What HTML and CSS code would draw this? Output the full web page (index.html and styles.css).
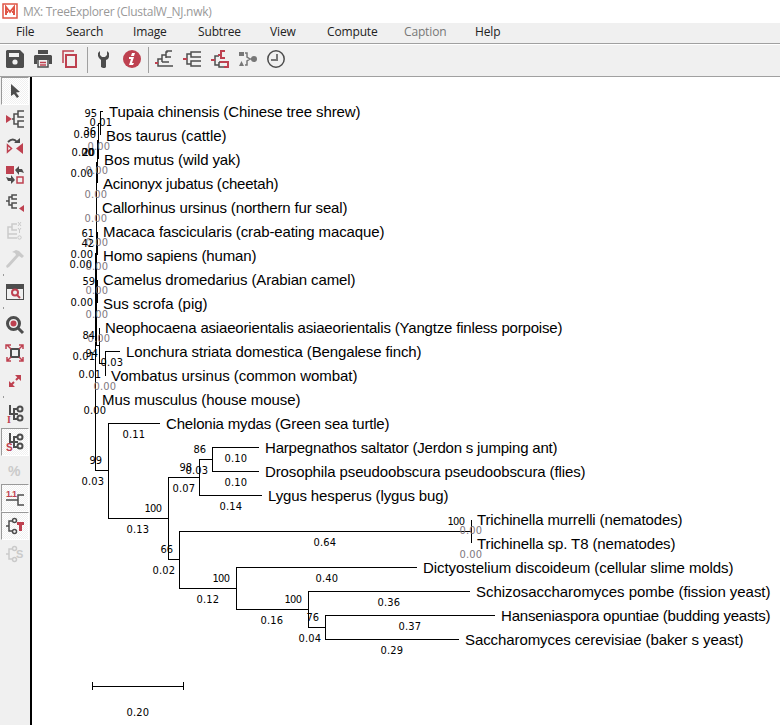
FILE: index.html
```html
<!DOCTYPE html>
<html lang="en">
<head>
<meta charset="utf-8">
<title>MX: TreeExplorer</title>
<link rel="stylesheet" href="styles.css">
</head>
<body>
<div class="window">
<header class="titlebar">
<svg class="logo" width="16" height="16" viewBox="0 0 16 16"><path class="rs" d="M1 1h14v14H1z"/><path class="rs" stroke-width="2" d="M4 12V4l4 5 4-5v8M4 9h2M10 9h2"/></svg>
<span>MX: TreeExplorer (ClustalW_NJ.nwk)</span>
</header>
<nav class="menu"><span>File</span><span>Search</span><span>Image</span><span>Subtree</span><span>View</span><span>Compute</span><span class="off">Caption</span><span>Help</span></nav>
<div class="toolbar">
<svg viewBox="0 0 18 18"><path class="d" d="M1 0h13l4 4v13l-1 1H1l-1-1V1z"/><path class="bg" d="M3 3h10v4H3z"/><circle class="bg" cx="9" cy="12" r="2.6"/></svg>
<svg viewBox="0 0 18 18"><path class="d" d="M4 0h10v4H4zM0 6l1-1h16l1 1v8h-3v-4H3v4H0z"/><path class="bg" d="M4 10h10v8H4z"/><path class="ds" d="M4 10v7h10v-7"/><path class="rs" d="M6 12.500h6M6 15h6"/></svg>
<svg viewBox="0 0 18 18"><path class="rs" d="M2 13V1h11"/><path class="rs" stroke-width="2" d="M5 5h10v12H5z"/></svg>
<i class="rule"></i>
<svg viewBox="0 0 18 18"><path class="d" d="M5 1v4l2 2h3l2-2V1l2 2v4l-1 2-2 1v7l-1 1H8l-2-1v-7L4 8 3 6V3z"/></svg>
<svg viewBox="0 0 18 18"><circle class="r" cx="9" cy="9" r="9"/><path class="w" d="M9 3h3l-1 3H8zM6 7h5l-2 6h2l-1 2H6l2-6H6z"/></svg>
<i class="rule"></i>
<svg viewBox="0 0 18 18"><path class="ds" d="M3 13V9h4M7 12V5h4M11 8V2h1V1h5M11 7h5M7 12h7M3 9v7h15"/><path class="rs" stroke-width="2" d="M0 13h3"/></svg>
<svg viewBox="0 0 18 18"><path class="ds" d="M4 9V4h4M4 9v5h4M18 2H8v5h10M18 11H8v5h10"/><path class="rs" stroke-width="2" d="M0 9h4"/></svg>
<svg viewBox="0 0 18 18"><path class="ds" d="M4 10V6h4M4 10v5h4M8 12v5h8M8 12h6"/><path class="rs" stroke-width="2" d="M0 10h4M14 1h-4v7h4M7 5h3M9 12h8v5h-4"/></svg>
<svg viewBox="0 0 18 18"><path class="m" d="M0 2h5v4H0zM0 16l2.500-5L5 16z"/><circle class="m" cx="15" cy="9" r="3"/><path class="ms" d="M6 3h2v4l3 2-3 2v4H6M10 9h3"/></svg>
<svg viewBox="0 0 18 18"><circle class="ds" cx="9" cy="9" r="8.200"/><path class="ms" stroke-width="2" d="M10 4v6H4"/></svg>
</div>
<main class="body">
<aside class="side">
<b class="on"><svg viewBox="0 0 18 18"><path class="d" d="M5 2l9 8-4 .6 3 4-2 1.400-3-4-3 2z"/></svg></b>
<b><svg viewBox="0 0 18 18"><path class="r" d="M0 5l6 4-6 4z"/><path class="ds" d="M6 9h2M12 4H8v10h4M18 1h-6v6h6M18 11h-6v6h6"/></svg></b>
<b><svg viewBox="0 0 18 18"><path class="rs" d="M1.500 7v7l4-3.500z"/><path class="r" d="M17 5v11l-7-5.500z"/><path class="ds" stroke-width="2" d="M2 4q5-5 9 0"/><path class="d" d="M8 5h6V0z"/></svg></b>
<b><svg viewBox="0 0 18 18"><path class="r" d="M0 0h8v8H0z"/><path class="rs" d="M11 11h6v6h-6z"/><path class="d" d="M9 4l4-4v3h3l2 4-3-1h-2v3zM9 14l-4 4v-3H2l-2-4 3 1h2V9z"/></svg></b>
<b><svg viewBox="0 0 18 18"><path class="ds" d="M0 7h3M6 3H3v8h3M11 1H6v4h5M11 9H6v5h5"/><path class="r" d="M18 11v7l-5-3.500z"/></svg></b>
<b><svg viewBox="0 0 18 18"><path class="gs" d="M6 5H2v11h9M11 2H6v6h5M6 12h5M2 12h4"/><path class="gs thin" d="M12 0l3 4M15 0l-3 4M12 6l1.500 2L15 6M13.500 8v3"/><circle class="gs thin" cx="13.500" cy="15.500" r="1.700"/></svg></b>
<b><svg viewBox="0 0 18 18"><path class="g" d="M6 2l4-2 3 1 5 5-2 2-3-2L3 17l-2 1-1-2L10 5 9 3z"/></svg></b>
<i class="dot"></i>
<b><svg viewBox="0 0 18 18"><path class="d" d="M0 1h18v16H0z"/><path class="bg" d="M1 6h16v10H1z"/><circle class="rs" stroke-width="2" cx="9" cy="9.500" r="3"/><path class="rs" stroke-width="2" d="M11 12l3 3"/></svg></b>
<i class="dot"></i>
<b><svg viewBox="0 0 18 18"><circle class="ds big" cx="7.500" cy="7.500" r="6"/><circle class="r" cx="7.500" cy="7.500" r="3"/><path class="ds big" d="M12 12l5 5"/></svg></b>
<b><svg viewBox="0 0 18 18"><path class="ds" stroke-width="2" d="M5 5h8v8H5z"/><path class="rs" d="M0 5V1h5M13 1h4v4M17 13v4h-4M5 17H1v-4M1 1l4 4M17 1l-4 4M17 17l-4-4M1 17l4-4"/></svg></b>
<b><svg viewBox="0 0 18 18"><path class="r" d="M9 3h6v6zM3 9v6h6z"/><path class="rs" stroke-width="2" d="M5 13l3-3M10 8l3-3"/></svg></b>
<i class="dot"></i>
<b><svg viewBox="0 0 18 18"><path class="ds" stroke-width="2" d="M4 0v9h8M8 9v5h4M8 9V4h4"/><circle class="ds" stroke-width="2" cx="14" cy="4" r="2.500"/><circle class="ds" stroke-width="2" cx="14" cy="13" r="2.500"/><text class="ic serif" x="1" y="18">I</text></svg></b>
<b class="on"><svg viewBox="0 0 18 18"><path class="ds" stroke-width="2" d="M4 0v9h8M8 9v5h4M8 9V4h4"/><circle class="ds" stroke-width="2" cx="14" cy="4" r="2.500"/><circle class="ds" stroke-width="2" cx="14" cy="13" r="2.500"/><text class="ic" x="0" y="18">S</text></svg></b>
<b><svg viewBox="0 0 18 18"><text class="ic pct" x="2" y="15">%</text></svg></b>
<b class="on"><svg viewBox="0 0 18 18"><text class="ic small" x="0" y="8" textLength="11">1.1</text><path class="ds" d="M0 11h12M18 6h-6v10h6"/></svg></b>
<b class="on"><svg viewBox="0 0 18 18"><path class="ds" d="M0 9h3M7 4H3v10h4"/><circle class="ds" cx="8.500" cy="3.500" r="2"/><circle class="ds" cx="8.500" cy="14.500" r="2"/><path class="r" d="M11 5h7v3h-2v6h-3V8h-2z"/></svg></b>
<b><svg viewBox="0 0 18 18"><path class="gs" d="M0 9h3M7 4H3v10h4"/><circle class="gs" cx="8.500" cy="3.500" r="2"/><circle class="gs" cx="8.500" cy="14.500" r="2"/><text class="ic faint" x="10" y="13">S</text></svg></b>
</aside>
<svg class="tree" id="tree" width="748" height="647" viewBox="32 78 748 647"></svg>
</main>
</div>
<script src="tree.js"></script>
</body>
</html>
```
FILE: styles.css
```css
body { margin: 0; background: #fff; }
.window { width: 780px; height: 725px; overflow: hidden; display: flex; flex-direction: column; font: 12px "Open Sans", "Noto Sans", sans-serif; }
.titlebar { height: 23px; flex: none; display: flex; align-items: center; gap: 5px; padding-left: 2px; color: #999; letter-spacing: -.3px; }
.titlebar svg { margin-bottom: 1px; }
.menu { height: 20px; line-height: 18px; flex: none; display: flex; align-items: flex-start; background: #f0f0f0; border-bottom: 1px solid #a0a0a0; color: #222; letter-spacing: -.15px; }
.menu span { width: 0; white-space: nowrap; }
.menu span:nth-child(1) { margin-left: 16px; }
.menu span:nth-child(2) { margin-left: 50px; }
.menu span:nth-child(3) { margin-left: 67px; }
.menu span:nth-child(4) { margin-left: 65px; }
.menu span:nth-child(5) { margin-left: 72px; }
.menu span:nth-child(6) { margin-left: 57px; }
.menu span:nth-child(7) { margin-left: 77px; }
.menu span:nth-child(8) { margin-left: 71px; }
.menu .off { color: #777; }
.toolbar { box-sizing: border-box; height: 33px; flex: none; display: flex; align-items: flex-start; gap: 10px; padding: 5px 0 0 6px; background: #f0f0f0; border-top: 1px solid #fff; border-bottom: 1px solid #a0a0a0; }
.toolbar svg, .side svg { width: 18px; height: 18px; flex: none; display: block; overflow: visible; }
.toolbar svg:nth-of-type(3) { margin-left: -1px; }
.rule { width: 1px; height: 26px; background: #a0a0a0; margin: -3px -3px 0 -2px; }
.rule + svg { margin-left: 0; }
.rule ~ .rule { margin-left: -3px; }
.rule ~ .rule + svg { margin-left: -1px; }
.body { flex: 1; display: flex; min-height: 0; }
.side { width: 30px; flex: none; background: #f0f0f0; border-right: 2px solid #000; }
.side b { display: block; box-sizing: border-box; height: 28px; width: 28px; margin-left: 1px; padding: 5px 0 0 5px; }
.side .on { border: 1px solid #fff; border-top-color: #999; border-left-color: #999; padding: 4px 0 0 4px; background: repeating-conic-gradient(#fff 0 25%, #f0f0f0 0 50%) 0 0 / 2px 2px; }
.dot { display: block; width: 1px; height: 2px; background: #999; margin: 1px 0 2px 3px; }
.tree { display: block; flex: none; margin-top: 1px; }
.d { fill: #4d4d4d; } .r { fill: #be4150; } .m { fill: #777; } .g { fill: #cacaca; } .bg { fill: #f0f0f0; } .w { fill: #fff; }
.ds, .rs, .ms, .gs { fill: none; }
.ds { stroke: #4d4d4d; } .rs { stroke: #be4150; } .ms { stroke: #777; } .gs { stroke: #cacaca; }
.ds:not([stroke-width]), .rs:not([stroke-width]), .ms:not([stroke-width]), .gs:not([stroke-width]) { stroke-width: 1.5; }
.logo .rs { stroke: #e05545; }
.gs.thin:not([stroke-width]) { stroke-width: 1; }
.ds.big:not([stroke-width]) { stroke-width: 3; }
.ic { font: bold 10px "Liberation Sans", sans-serif; fill: #be4150; }
.serif { font-family: "Liberation Serif", serif; }
.small { font-size: 9px; }
.pct { font-size: 14px; fill: #cacaca; }
.faint { font-size: 11px; fill: #cacaca; }
.branch { fill: none; stroke: #000; stroke-width: 1; shape-rendering: crispEdges; }
.name { font: 15px "Liberation Sans", Arial, sans-serif; fill: #000; }
.num { font: 11px "DejaVu Sans Condensed", "DejaVu Sans", sans-serif; fill: #000; }
.zero { fill: #807880; }
```
FILE: tree.js
```js
const tree = document.getElementById('tree');
const make = (tag, attrs, text) => {
  const el = document.createElementNS('http://www.w3.org/2000/svg', tag);
  for (const key in attrs) el.setAttribute(key, attrs[key]);
  if (text) el.textContent = text;
  tree.appendChild(el);
};

// Branches: horizontal [y, x1, x2] and vertical [x, y1, y2]
const across = [[111,100,102],[123,98,100],[345,96,99],[363,99,105],[351,105,119],[470,95,108],[423,108,159],[518,108,168],[477,168,199],[459,199,212],[447,212,258],[471,212,258],[495,199,261],[559,168,179],[531,179,471],[588,179,236],[567,236,416],[609,236,308],[591,308,469],[627,308,325],[615,325,494],[639,325,458],[686,92,183]];
const down = [[100,111,134],[98,123,158],[97,140,182],[96,162,345],[97,232,254],[97,280,302],[99,328,363],[105,351,375],[95,253,470],[108,423,518],[168,477,559],[199,459,495],[212,447,471],[179,531,588],[471,520,542],[236,567,609],[308,591,627],[325,615,639],[92,682,689],[183,682,689]];
let d = '';
for (const [y, a, b] of across) d += `M${a} ${y + .5}H${b + 1}`;
for (const [x, a, b] of down) d += `M${x + .5} ${a}V${b + 1}`;
make('path', { class: 'branch', d });

// Support values and branch lengths: [x, baseline, text]
const zeros = [[88,150],[86,174],[85,198],[85,222],[86,246],[86,270],[86,294],[86,318],[88,342],[94,390],[460,534],[460,558]];
for (const [x, y] of zeros) make('text', { class: 'num zero', x: x - .5, y, textLength: 22.5 }, '0.00');
const values = [[85,117,'95'],[90,126,'0.01'],[84,135,'36'],[74,138,'0.00'],[72,156,'0.00'],[82,156,'20'],[83,156,'20'],[71,177,'0.00'],[82,237,'61'],[82,247,'42'],[71,258,'0.00'],[70,268,'0.00'],[83,285,'59'],[71,306,'0.00'],[83,339,'84'],[73,360,'0.01'],[86,357,'94'],[101,366,'0.03'],[79,378,'0.01'],[84,414,'0.00'],[90,464,'99'],[82,485,'0.03'],[123,438,'0.11'],[194,453,'86'],[180,471,'98'],[186,474,'0.03'],[225,462,'0.10'],[225,486,'0.10'],[173,492,'0.07'],[220,510,'0.14'],[145,512,'100'],[127,533,'0.13'],[161,553,'66'],[153,574,'0.02'],[213,582,'100'],[197,603,'0.12'],[448,525,'100'],[314,546,'0.64'],[316,582,'0.40'],[285,603,'100'],[378,606,'0.36'],[307,621,'76'],[261,624,'0.16'],[399,630,'0.37'],[299,642,'0.04'],[381,654,'0.29'],[127,716,'0.20']];
for (const [x, y, s] of values) make('text', { class: 'num', x: x - .5, y, textLength: s.length === 4 ? 22.5 : s.length === 3 ? 17.5 : 12.5 }, s);

// Taxa from top to bottom: [left, right, name]
const taxa = [[110,360,'Tupaia chinensis (Chinese tree shrew)'],[107,226,'Bos taurus (cattle)'],[105,240,'Bos mutus (wild yak)'],[104,278,'Acinonyx jubatus (cheetah)'],[103,347,'Callorhinus ursinus (northern fur seal)'],[104,384,'Macaca fascicularis (crab-eating macaque)'],[104,256,'Homo sapiens (human)'],[104,355,'Camelus dromedarius (Arabian camel)'],[104,207,'Sus scrofa (pig)'],[106,562,'Neophocaena asiaeorientalis asiaeorientalis (Yangtze finless porpoise)'],[127,421,'Lonchura striata domestica (Bengalese finch)'],[112,357,'Vombatus ursinus (common wombat)'],[103,300,'Mus musculus (house mouse)'],[167,389,'Chelonia mydas (Green sea turtle)'],[266,557,'Harpegnathos saltator (Jerdon s jumping ant)'],[266,585,'Drosophila pseudoobscura pseudoobscura (flies)'],[269,448,'Lygus hesperus (lygus bug)'],[478,682,'Trichinella murrelli (nematodes)'],[478,675,'Trichinella sp. T8 (nematodes)'],[424,733,'Dictyostelium discoideum (cellular slime molds)'],[477,770,'Schizosaccharomyces pombe (fission yeast)'],[502,770,'Hanseniaspora opuntiae (budding yeasts)'],[466,743,'Saccharomyces cerevisiae (baker s yeast)']];
taxa.forEach(([a, b, s], i) => make('text', { class: 'name', x: a - 1, y: 117 + 24 * i, textLength: b - a + 1.5 }, s));
```
